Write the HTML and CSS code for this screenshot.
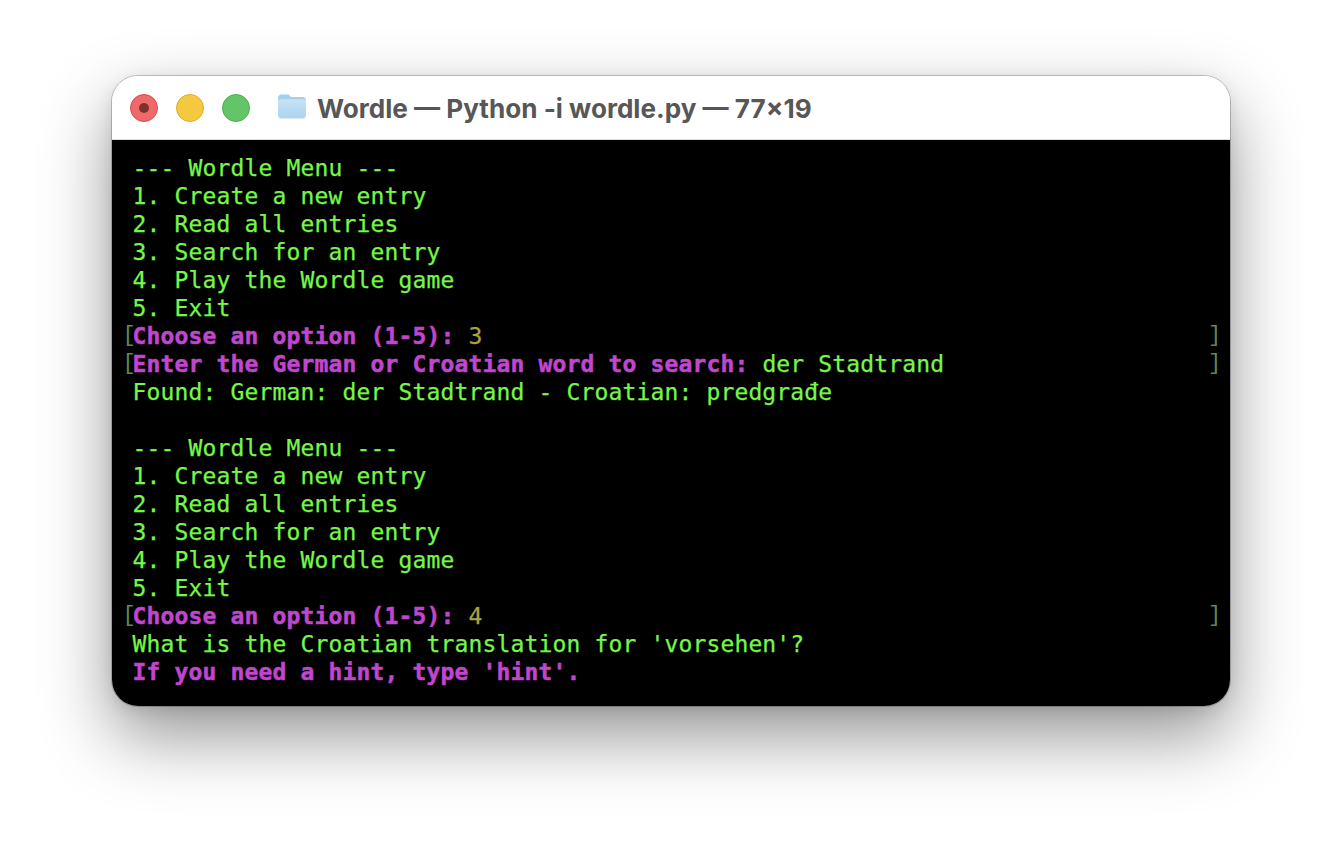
FILE: index.html
```html
<!DOCTYPE html>
<html lang="en">
<head>
<meta charset="utf-8">
<title>Wordle</title>
<link rel="stylesheet" href="styles.css">
</head>
<body>
<main class="window">
  <header class="titlebar">
    <div class="lights">
      <span class="light red"><span class="dot"></span></span>
      <span class="light yellow"></span>
      <span class="light green"></span>
    </div>
    <svg class="folder" width="30" height="26" viewBox="0 0 30 26" aria-hidden="true">
      <defs>
        <linearGradient id="fg" x1="0" y1="0" x2="0" y2="1">
          <stop offset="0" stop-color="#c6e3f6"/>
          <stop offset="1" stop-color="#acd3ee"/>
        </linearGradient>
      </defs>
      <path d="M1 5.5C1 3 2.2 1.5 4.5 1.5H10.5C12 1.5 12.6 2.2 13.4 3.2L14 4H25.5C27.8 4 29 5.3 29 7.5V10H1Z" fill="#a6cfeb"/>
      <path d="M1 8.5C1 7 2 6.3 3.3 6.3H26.7C28 6.3 29 7 29 8.5V22C29 24.2 27.8 25.5 25.5 25.5H4.5C2.2 25.5 1 24.2 1 22Z" fill="url(#fg)"/>
    </svg>
    <h1 class="title">Wordle — Python -i wordle.py — 77×19</h1>
  </header>
  <section class="term">
    <div class="row">--- Wordle Menu ---</div>
    <div class="row">1. Create a new entry</div>
    <div class="row">2. Read all entries</div>
    <div class="row">3. Search for an entry</div>
    <div class="row">4. Play the Wordle game</div>
    <div class="row">5. Exit</div>
    <div class="row mark"><span class="br open">[</span><span><b>Choose an option (1-5): </b><span class="input">3</span></span><span class="br close">]</span></div>
    <div class="row mark"><span class="br open">[</span><span><b>Enter the German or Croatian word to search: </b>der Stadtrand</span><span class="br close">]</span></div>
    <div class="row">Found: German: der Stadtrand - Croatian: predgrađe</div>
    <div class="row">&nbsp;</div>
    <div class="row">--- Wordle Menu ---</div>
    <div class="row">1. Create a new entry</div>
    <div class="row">2. Read all entries</div>
    <div class="row">3. Search for an entry</div>
    <div class="row">4. Play the Wordle game</div>
    <div class="row">5. Exit</div>
    <div class="row mark"><span class="br open">[</span><span><b>Choose an option (1-5): </b><span class="input">4</span></span><span class="br close">]</span></div>
    <div class="row">What is the Croatian translation for 'vorsehen'?</div>
    <div class="row"><b>If you need a hint, type 'hint'.</b></div>
  </section>
</main>
</body>
</html>
```
FILE: styles.css
```css
html, body {
  margin: 0;
  height: 100%;
  background: #fff;
  overflow: hidden;
}
body {
  padding: 76px 0 0 112px;
  box-sizing: border-box;
}
.window {
  width: 1118px;
  height: 630px;
  border-radius: 26px;
  overflow: hidden;
  box-shadow: 0 0 0 1px rgba(0,0,0,.2), 0 30px 70px rgba(0,0,0,.42), 0 4px 16px rgba(0,0,0,.1);
  display: flex;
  flex-direction: column;
}
.titlebar {
  height: 63px;
  flex: none;
  background: #fff;
  border-bottom: 1px solid #dedede;
  display: flex;
  align-items: center;
  padding-left: 18px;
}
.lights {
  display: flex;
  gap: 18px;
}
.light {
  width: 28px;
  height: 28px;
  box-sizing: border-box;
  border-radius: 50%;
  border: 1px solid;
  display: flex;
  align-items: center;
  justify-content: center;
}
.red { background: #f0696a; border-color: #e0484a; }
.yellow { background: #f4c940; border-color: #dfaa2f; }
.green { background: #63c566; border-color: #4cae4f; }
.dot {
  width: 10px;
  height: 10px;
  border-radius: 50%;
  background: #7d3130;
}
.folder {
  margin-left: 27px;
  margin-top: -4px;
}
.title {
  margin: 2px 0 0 10px;
  font: 700 26.1px "Inter", sans-serif;
  color: #575757;
  white-space: nowrap;
}
.term {
  flex: 1;
  background: #000;
  padding: 14px 15px 0 20.5px;
  font: 400 23px/28px "DejaVu Sans Mono", monospace;
  letter-spacing: .15px;
  color: #75f848;
  -webkit-text-stroke: .25px currentColor;
}
.row {
  height: 28px;
  white-space: pre;
}
.mark {
  display: flex;
}
.row b {
  color: #c146cf;
  font-weight: 700;
  -webkit-text-stroke: .5px currentColor;
}
.input {
  color: #a9a33d;
}
.br {
  color: #5d8a4f;
  font-family: "Liberation Mono", monospace;
  font-size: 22px;
  font-weight: 400;
  letter-spacing: -6.2px;
  width: 7px;
  -webkit-text-stroke: 0;
}
.open {
  margin-left: -10px;
  margin-right: 3px;
}
.close {
  margin-left: auto;
}
```
